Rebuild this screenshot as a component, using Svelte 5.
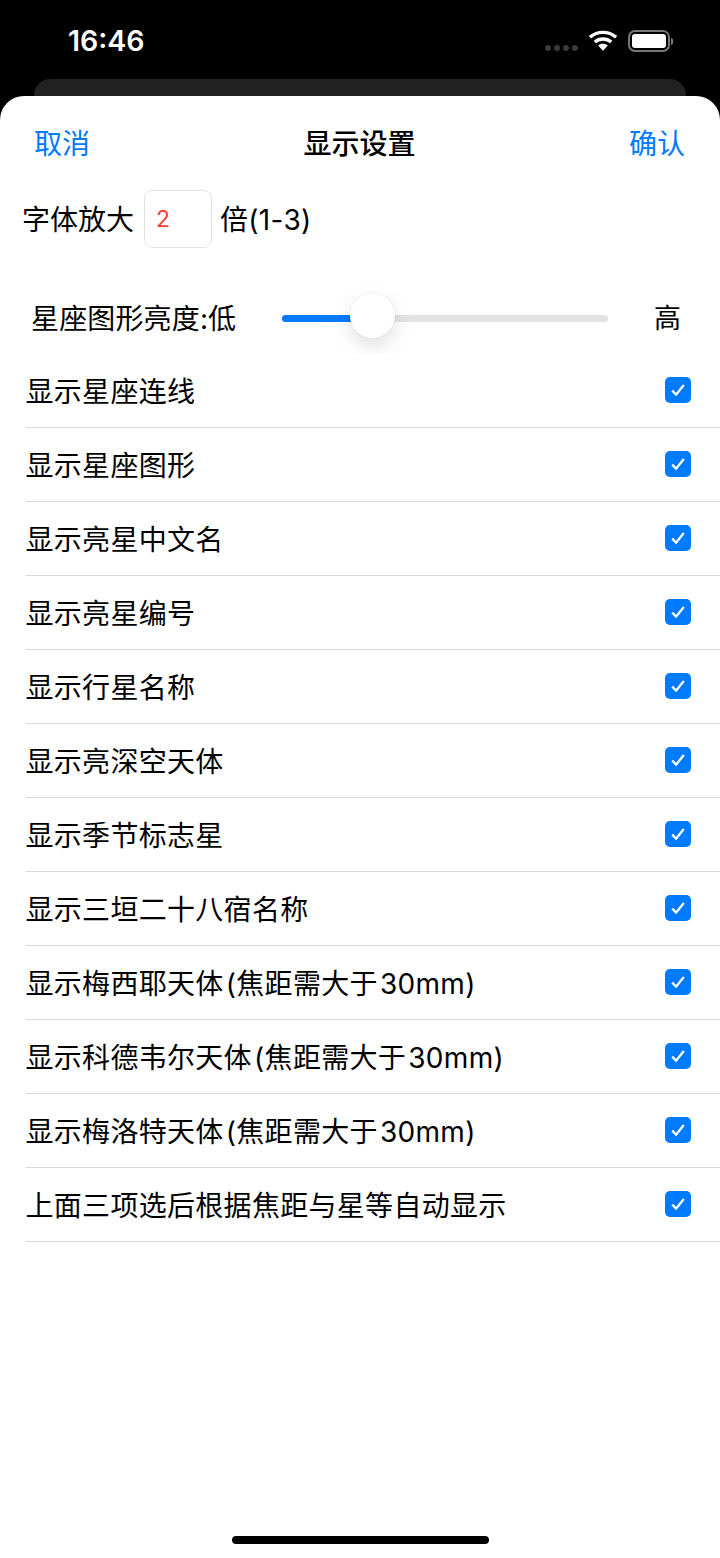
<script lang="ts">
  // 显示设置 sheet
  const options = [
    '显示星座连线',
    '显示星座图形',
    '显示亮星中文名',
    '显示亮星编号',
    '显示行星名称',
    '显示亮深空天体',
    '显示季节标志星',
    '显示三垣二十八宿名称',
    '显示梅西耶天体 (焦距需大于 30mm)',
    '显示科德韦尔天体 (焦距需大于 30mm)',
    '显示梅洛特天体 (焦距需大于 30mm)',
    '上面三项选后根据焦距与星等自动显示'
  ];
  let checked = $state(options.map(() => true));
</script>

<div class="screen">
  <div class="status">
    <span class="time">16:46</span>
    <div class="status-right">
      <div class="dots"><i></i><i></i><i></i><i></i></div>
      <svg class="wifi" width="28" height="21" viewBox="0 0 30 22">
        <path d="M1 7.5C9 .5 21 .5 29 7.5" fill="none" stroke="#fff" stroke-width="3.6" />
        <path d="M6.2 12.6c5-4.3 12.6-4.3 17.6 0" fill="none" stroke="#fff" stroke-width="3.6" />
        <path d="M15 22l-5.2-5.6c3-2.5 7.4-2.5 10.4 0z" fill="#fff" />
      </svg>
      <div class="battery"><div class="battery-fill"></div></div>
      <div class="battery-cap"></div>
    </div>
  </div>
  <div class="back-card"></div>

  <div class="sheet">
    <header class="nav">
      <button type="button" class="link">取消</button>
      <h1>显示设置</h1>
      <button type="button" class="link">确认</button>
    </header>

    <div class="zoom-row">
      <span>字体放大</span>
      <div class="num">2</div>
      <span class="zoom-unit">倍(1-3)</span>
    </div>

    <div class="bright-row">
      <span class="bright-label">星座图形亮度:低</span>
      <div class="slider">
        <div class="track"><div class="track-on"></div></div>
        <div class="thumb"></div>
      </div>
      <span class="bright-high">高</span>
    </div>

    <ul class="list">
      {#each options as label, i}
        <li>
          <span class="label">{label}</span>
          <button
            type="button"
            class="check"
            class:off={!checked[i]}
            aria-label={label}
            onclick={() => (checked[i] = !checked[i])}
          >
            {#if checked[i]}
              <svg width="14" height="12" viewBox="0 0 14 12">
                <path d="M1.2 6.6l3.9 4L12.8 1" fill="none" stroke="#fff" stroke-width="2.3" />
              </svg>
            {/if}
          </button>
        </li>
      {/each}
    </ul>

    <div class="home"></div>
  </div>
</div>

<style>
  :global(body) {
    margin: 0;
    background: #000;
  }
  .screen {
    width: 720px;
    height: 1558px;
    display: flex;
    flex-direction: column;
    background: #000;
    overflow: hidden;
    font-family: Inter, "Noto Sans CJK SC", sans-serif;
    color: #000;
  }
  .status {
    height: 79px;
    flex: none;
    display: flex;
    justify-content: space-between;
    box-sizing: border-box;
    padding: 23px 47px 0 68px;
    color: #fff;
  }
  .time {
    font-size: 28.5px;
    font-weight: 600;
    line-height: 36px;
  }
  .status-right {
    display: flex;
    align-items: flex-start;
    height: 26px;
    margin-top: 6px;
  }
  .dots {
    display: flex;
    gap: 3px;
    margin-top: 16px;
    margin-right: 11px;
  }
  .dots i {
    width: 6px;
    height: 6px;
    border-radius: 50%;
    background: #3c3c3c;
  }
  .wifi {
    margin-right: 11px;
    margin-top: 1px;
  }
  .battery {
    width: 42px;
    height: 22px;
    box-sizing: border-box;
    border: 2px solid #777;
    border-radius: 7px;
    padding: 2px;
    margin-top: 1px;
  }
  .battery-fill {
    height: 100%;
    background: #fff;
    border-radius: 3px;
  }
  .battery-cap {
    width: 2px;
    height: 7px;
    margin: 9px 0 0 1px;
    background: #777;
    border-radius: 0 2px 2px 0;
  }
  .back-card {
    height: 17px;
    flex: none;
    margin: 0 34px;
    background: #222;
    border-radius: 16px 16px 0 0;
  }
  .sheet {
    flex: 1;
    display: flex;
    flex-direction: column;
    background: #fff;
    border-radius: 24px 24px 0 0;
  }
  .nav {
    height: 94px;
    flex: none;
    display: flex;
    align-items: center;
    justify-content: space-between;
    box-sizing: border-box;
    padding: 0 35px 2px 34px;
  }
  .nav h1 {
    margin: 0;
    font-size: 28px;
    font-weight: 500;
  }
  .link {
    padding: 0;
    border: 0;
    background: none;
    font: inherit;
    font-size: 28px;
    color: #007aff;
  }
  .zoom-row {
    height: 58px;
    flex: none;
    display: flex;
    align-items: center;
    padding-left: 22px;
    font-size: 28px;
  }
  .zoom-row span {
    margin-top: -2px;
  }
  .num {
    width: 68px;
    height: 58px;
    margin: 0 8px 0 10px;
    box-sizing: border-box;
    border: 1px solid #e4e4e4;
    border-radius: 8px;
    padding-left: 11px;
    font-size: 23px;
    line-height: 56px;
    color: #ff3b30;
  }
  .zoom-unit {
    letter-spacing: 0.3px;
  }
  .bright-row {
    height: 106px;
    flex: none;
    display: flex;
    align-items: center;
    box-sizing: border-box;
    padding: 45px 0 15px;
  }
  .bright-label {
    width: 282px;
    margin-top: 2px;
    padding-left: 31px;
    box-sizing: border-box;
    font-size: 28px;
    letter-spacing: 0.15px;
  }
  .slider {
    position: relative;
    width: 326px;
    height: 46px;
  }
  .track {
    position: absolute;
    left: 0;
    right: 0;
    top: 22px;
    height: 7px;
    border-radius: 4px;
    background: #e3e3e3;
    overflow: hidden;
  }
  .track-on {
    width: 90px;
    height: 100%;
    background: #007aff;
  }
  .thumb {
    position: absolute;
    left: 68px;
    top: 0;
    width: 45px;
    height: 45px;
    border-radius: 50%;
    background: #fff;
    box-shadow: 0 8px 20px rgba(0, 0, 0, 0.13), 0 0 2px rgba(0, 0, 0, 0.08);
  }
  .bright-high {
    margin-left: 46px;
    font-size: 27px;
  }
  .list {
    list-style: none;
    margin: 0;
    padding: 0;
    flex: none;
    background: #fff;
    position: relative;
  }
  .list li {
    height: 74px;
    box-sizing: border-box;
    margin-left: 26px;
    padding: 0 29px 2px 0;
    border-bottom: 1px solid #d9d9d9;
    display: flex;
    align-items: center;
    justify-content: space-between;
    font-size: 28px;
    letter-spacing: 0.3px;
    word-spacing: -6px;
  }
  .label {
    margin-left: -0.5px;
  }
  .check {
    width: 26px;
    height: 26px;
    padding: 0;
    border: 0;
    border-radius: 5px;
    background: #007aff;
    display: flex;
    align-items: center;
    justify-content: center;
  }
  .check.off {
    background: #fff;
    box-shadow: inset 0 0 0 1px #ccc;
  }
  .home {
    width: 257px;
    height: 8px;
    margin: auto auto 14px;
    border-radius: 4px;
    background: #000;
  }
</style>
